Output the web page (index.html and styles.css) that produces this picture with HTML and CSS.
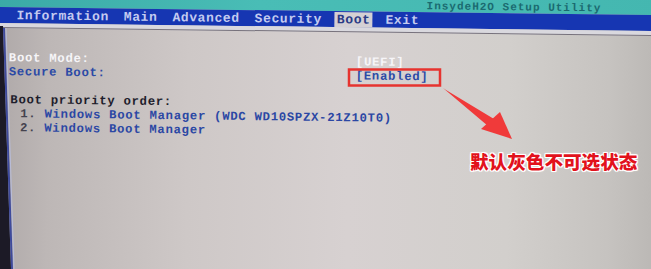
FILE: index.html
```html
<!DOCTYPE html>
<html lang="zh-CN">
<head>
    <meta charset="UTF-8">
    <meta name="viewport" content="width=device-width, initial-scale=1.0">
    <title>InsydeH2O Setup Utility - Boot</title>
    <link rel="stylesheet" href="styles.css">
</head>
<body>
    <div class="screen">
        <div class="titlebar">
            <span class="title">InsydeH2O Setup Utility</span>
        </div>
        <div class="tabs">
            <span class="tab">Information</span>
            <span class="tab">Main</span>
            <span class="tab">Advanced</span>
            <span class="tab">Security</span>
            <span class="tab active">Boot</span>
            <span class="tab">Exit</span>
        </div>
        <div class="rule"></div>
        <div class="content">
            <div class="label grayed">Boot Mode:</div>
            <div class="value grayed">[UEFI]</div>
            <div class="label blue">Secure Boot:</div>
            <div class="value blue">[Enabled]</div>
            <div class="spacer"></div>
            <div class="label dark wide">Boot priority order:</div>
            <div class="item wide"><span class="num">1.</span> Windows Boot Manager (WDC WD10SPZX-21Z10T0)</div>
            <div class="item wide"><span class="num">2.</span> Windows Boot Manager</div>
        </div>
    </div>

    <div class="overlay">
        <svg width="651" height="269" viewBox="0 0 651 269">
            <polygon points="0,26 3,26 11,269 0,269" fill="#1c1a26"/>
            <line x1="4" y1="28" x2="12" y2="269" stroke="#3e4a9c" stroke-width="2"/>
            <line x1="6" y1="28" x2="14" y2="269" stroke="#b8bcd8" stroke-width="1"/>
            <rect x="349" y="69.5" width="91" height="16" fill="none" stroke="#e6332f" stroke-width="2.5"/>
            <polygon points="443,88 446,90 494,119 488,126" fill="#f03a3a"/>
            <polygon points="512,139 481,129 500,112" fill="#f03a3a"/>
        </svg>
        <div class="note">默认灰色不可选状态</div>
    </div>
</body>
</html>
```

FILE: styles.css
```css
body {
    margin: 0;
    width: 651px;
    height: 269px;
    overflow: hidden;
    background: #c8c2c0;
    position: relative;
}
.screen {
    margin: -10px -12px 0;
    height: 288px;
    overflow: hidden;
    transform: rotate(0.7deg);
    transform-origin: 337px 144px;
    background: linear-gradient(90deg, #aca6a6 0px, #bdb7b6 60px, #cec8c7 200px, #d7d1d1 360px, #d2cfcc 520px, #c6c3c0 620px, #bcb9b6 663px);
    font-family: "Liberation Mono", "DejaVu Sans Mono", monospace;
    font-weight: bold;
}
.titlebar {
    height: 21px;
    display: flex;
    align-items: flex-end;
    padding-left: 437px;
    background: linear-gradient(90deg, #3aa9a6, #49bdb6 40%, #44b7b0);
}
.title {
    font-size: 11px;
    letter-spacing: 1px;
    line-height: 12px;
    color: #1b6a70;
}
.tabs {
    height: 16px;
    display: flex;
    align-items: center;
    gap: 11px;
    padding-left: 25px;
    background: #1636b2;
}
.tab {
    font-size: 13px;
    letter-spacing: 0.6px;
    line-height: 15px;
    padding: 0 2px;
    color: #c4cbf0;
}
.tab.active {
    background: #d4d0d4;
    color: #2a3a86;
}
.rule {
    height: 4px;
    background: #d9d8de;
    border-bottom: 1px solid #77727c;
}
.content {
    display: grid;
    grid-template-columns: 347px auto;
    grid-auto-rows: 14px;
    padding: 23px 0 0 20px;
    font-size: 12.3px;
    letter-spacing: 0.7px;
    line-height: 14px;
}
.wide {
    grid-column: 1 / 3;
}
.spacer {
    grid-column: 1 / 3;
}
.grayed {
    color: #f6f5f8;
}
.blue {
    color: #2c4aa6;
}
.dark {
    color: #1e1d2c;
    padding-left: 2px;
}
.item {
    padding-left: 12px;
    color: #2b47a4;
}
.num {
    color: #44424e;
}
.overlay {
    position: absolute;
    left: 0;
    top: 0;
    width: 651px;
    height: 269px;
}
.overlay svg {
    display: block;
}
.note {
    position: absolute;
    left: 470px;
    top: 149px;
    font-family: "Noto Sans CJK SC", sans-serif;
    font-weight: 900;
    font-size: 18.6px;
    line-height: 24px;
    color: #e2121c;
    text-shadow: 1px 0 0 #fff, -1px 0 0 #fff, 0 1px 0 #fff, 0 -1px 0 #fff,
        1px 1px 0 #fff, -1px -1px 0 #fff, 1px -1px 0 #fff, -1px 1px 0 #fff,
        0 0 3px #fff;
}
```
